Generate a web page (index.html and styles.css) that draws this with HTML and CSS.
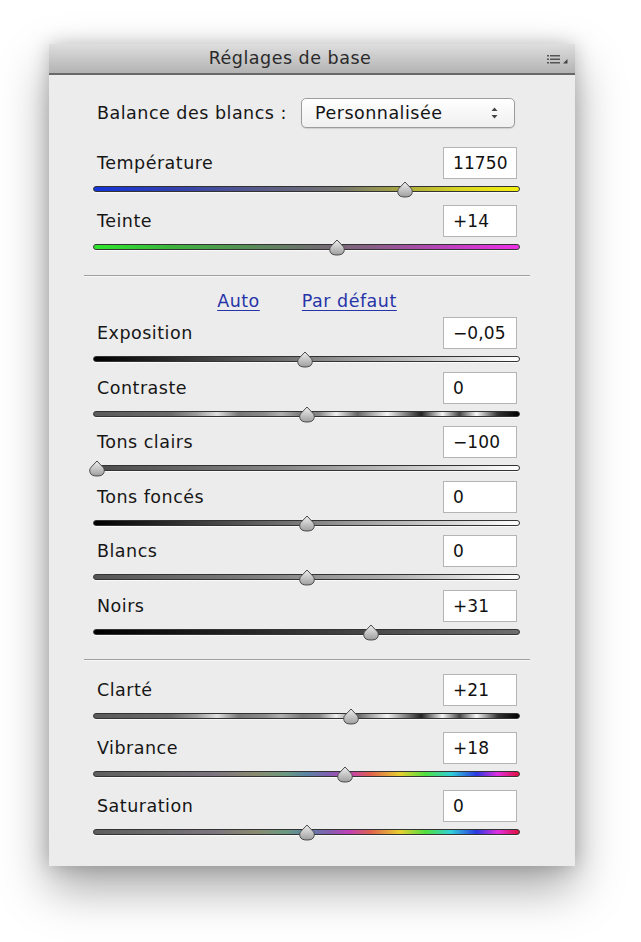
FILE: index.html
```html
<!DOCTYPE html>
<html lang="fr">
<head>
<meta charset="utf-8">
<title>Réglages de base</title>
<link rel="stylesheet" href="styles.css">
</head>
<body>
<svg class="defs" width="0" height="0" aria-hidden="true">
  <defs>
    <linearGradient id="thumbFill" x1="0" y1="0" x2="0" y2="1">
      <stop offset="0" stop-color="#f0f0f0"/>
      <stop offset="1" stop-color="#9e9e9e"/>
    </linearGradient>
    <symbol id="thumb" viewBox="0 0 17 17">
      <path d="M8.5 1 L14.5 7.3 C15.9 8.8 16 10.8 15.5 12.4 C14.6 15.4 11.6 16 8.5 16 C5.4 16 2.4 15.4 1.5 12.4 C1 10.8 1.1 8.8 2.5 7.3 Z" fill="url(#thumbFill)" stroke="#4a4a4a" stroke-width="1"/>
    </symbol>
  </defs>
</svg>

<div class="panel">
  <div class="header">
    <span class="title">Réglages de base</span>
    <svg class="menu-icon" width="21" height="11" viewBox="0 0 21 11">
      <rect x="0" y="1" width="2" height="1.5" fill="#555"/>
      <rect x="3" y="1" width="10" height="1.5" fill="#555"/>
      <rect x="0" y="4.5" width="2" height="1.5" fill="#555"/>
      <rect x="3" y="4.5" width="10" height="1.5" fill="#555"/>
      <rect x="0" y="8" width="2" height="1.5" fill="#555"/>
      <rect x="3" y="8" width="10" height="1.5" fill="#555"/>
      <polygon points="16,9.5 20.5,9.5 20.5,5" fill="#444"/>
    </svg>
  </div>

  <div class="content">
    <div class="wb-row">
      <span class="label">Balance des blancs :</span>
      <div class="popup">
        <span>Personnalisée</span>
        <svg class="updown" width="7" height="12" viewBox="0 0 7 12">
          <polygon points="3.5,0.5 6.5,4 0.5,4" fill="#444"/>
          <polygon points="0.5,8 6.5,8 3.5,11.5" fill="#444"/>
        </svg>
      </div>
    </div>

    <div class="group group-wide">
      <div class="slider">
        <div class="row-head"><span class="label">Température</span><span class="value">11750</span></div>
        <div class="track-area"><div class="track tr-temp"></div><div class="lane"><svg class="thumb" style="left:73.5%"><use href="#thumb"/></svg></div></div>
      </div>
      <div class="slider">
        <div class="row-head"><span class="label">Teinte</span><span class="value">+14</span></div>
        <div class="track-area"><div class="track tr-tint"></div><div class="lane"><svg class="thumb" style="left:57.3%"><use href="#thumb"/></svg></div></div>
      </div>
    </div>

    <div class="sep sep-1"></div>

    <div class="links">
      <a class="link" href="#">Auto</a>
      <a class="link" href="#">Par défaut</a>
    </div>

    <div class="group group-tight">
      <div class="slider">
        <div class="row-head"><span class="label">Exposition</span><span class="value">−0,05</span></div>
        <div class="track-area"><div class="track tr-expo"></div><div class="lane"><svg class="thumb" style="left:49.6%"><use href="#thumb"/></svg></div></div>
      </div>
      <div class="slider">
        <div class="row-head"><span class="label">Contraste</span><span class="value">0</span></div>
        <div class="track-area"><div class="track tr-contrast"></div><div class="lane"><svg class="thumb" style="left:50%"><use href="#thumb"/></svg></div></div>
      </div>
      <div class="slider">
        <div class="row-head"><span class="label">Tons clairs</span><span class="value">−100</span></div>
        <div class="track-area"><div class="track tr-high"></div><div class="lane"><svg class="thumb" style="left:0%"><use href="#thumb"/></svg></div></div>
      </div>
      <div class="slider">
        <div class="row-head"><span class="label">Tons foncés</span><span class="value">0</span></div>
        <div class="track-area"><div class="track tr-expo"></div><div class="lane"><svg class="thumb" style="left:50%"><use href="#thumb"/></svg></div></div>
      </div>
      <div class="slider">
        <div class="row-head"><span class="label">Blancs</span><span class="value">0</span></div>
        <div class="track-area"><div class="track tr-whites"></div><div class="lane"><svg class="thumb" style="left:50%"><use href="#thumb"/></svg></div></div>
      </div>
      <div class="slider">
        <div class="row-head"><span class="label">Noirs</span><span class="value">+31</span></div>
        <div class="track-area"><div class="track tr-blacks"></div><div class="lane"><svg class="thumb" style="left:65.5%"><use href="#thumb"/></svg></div></div>
      </div>
    </div>

    <div class="sep sep-2"></div>

    <div class="group group-wide">
      <div class="slider">
        <div class="row-head"><span class="label">Clarté</span><span class="value">+21</span></div>
        <div class="track-area"><div class="track tr-contrast"></div><div class="lane"><svg class="thumb" style="left:60.7%"><use href="#thumb"/></svg></div></div>
      </div>
      <div class="slider">
        <div class="row-head"><span class="label">Vibrance</span><span class="value">+18</span></div>
        <div class="track-area"><div class="track tr-sat"></div><div class="lane"><svg class="thumb" style="left:59.1%"><use href="#thumb"/></svg></div></div>
      </div>
      <div class="slider">
        <div class="row-head"><span class="label">Saturation</span><span class="value">0</span></div>
        <div class="track-area"><div class="track tr-sat"></div><div class="lane"><svg class="thumb" style="left:50%"><use href="#thumb"/></svg></div></div>
      </div>
    </div>
  </div>
</div>
</body>
</html>
```

FILE: styles.css
```css
html, body {
  margin: 0;
  padding: 0;
  background: #ffffff;
}

body {
  font-family: "DejaVu Sans", "Liberation Sans", sans-serif;
  font-size: 17.5px;
  letter-spacing: 0.5px;
  color: #161616;
  width: 641px;
  height: 942px;
  overflow: hidden;
}

.defs {
  position: absolute;
  width: 0;
  height: 0;
}

.panel {
  margin: 44px 0 0 49px;
  width: 526px;
  background: #ececec;
  box-shadow: 0 22px 45px rgba(0, 0, 0, 0.35), 0 0 18px rgba(0, 0, 0, 0.2);
}

.header {
  display: flex;
  align-items: center;
  height: 29px;
  background: linear-gradient(#dedede, #b3b3b3);
  border-bottom: 2px solid #686868;
}

.title {
  flex: 1;
  text-align: center;
  padding-right: 16px;
  line-height: 29px;
  color: #2a2a2a;
}

.menu-icon {
  display: block;
  margin-right: 7px;
  margin-top: 1px;
}

.content {
  padding: 23px 55px 24px 44px;
}

.wb-row {
  display: flex;
  align-items: center;
  justify-content: space-between;
  padding: 0 5px 0 4px;
  height: 30px;
  margin-bottom: 19px;
}

.label {
  line-height: 32px;
  white-space: nowrap;
}

.popup {
  box-sizing: border-box;
  width: 214px;
  height: 30px;
  display: flex;
  align-items: center;
  justify-content: space-between;
  padding: 0 16px 0 13px;
  background: linear-gradient(#ffffff, #f0f0f0);
  border: 1px solid #9c9c9c;
  border-radius: 5px;
  box-shadow: 0 1px 1px rgba(0, 0, 0, 0.12);
  color: #141414;
}

.updown {
  display: block;
}

.group {
  display: flex;
  flex-direction: column;
}

.group-wide {
  gap: 6px;
}

.group-tight {
  gap: 2.6px;
}

.row-head {
  display: flex;
  align-items: center;
  justify-content: space-between;
  height: 32px;
  padding: 0 3px 0 4px;
}

.value {
  box-sizing: border-box;
  width: 74px;
  height: 32px;
  line-height: 30px;
  padding-left: 9px;
  font-size: 17px;
  letter-spacing: 0.1px;
  background: #ffffff;
  border: 1px solid #b4b4b4;
  color: #111;
}

.track-area {
  position: relative;
  height: 20px;
}

.track {
  box-sizing: border-box;
  position: relative;
  top: 7px;
  height: 6px;
  border-radius: 3px;
  border: 1px solid #333;
  box-shadow: 0 1px 0 rgba(255, 255, 255, 0.75);
}

.lane {
  position: absolute;
  top: 0;
  bottom: 0;
  left: 4px;
  right: 4px;
}

.thumb {
  position: absolute;
  top: 2px;
  width: 17px;
  height: 17px;
  transform: translateX(-50%);
}

.tr-temp {
  background: linear-gradient(90deg, #1434d8 0%, #3040b0 18%, #5a5c88 40%, #767670 58%, #a6a640 72%, #d8d622 86%, #f4f010 100%);
}

.tr-tint {
  background: linear-gradient(90deg, #2ee62e 0%, #3cb43c 18%, #5a8a5a 38%, #707070 52%, #8a5e88 66%, #c040c0 84%, #ec30e6 100%);
}

.tr-expo {
  background: linear-gradient(90deg, #000000 0%, #555 35%, #9a9a9a 60%, #ffffff 100%);
}

.tr-high {
  background: linear-gradient(90deg, #4a4a4a 0%, #888 45%, #c8c8c8 75%, #ffffff 100%);
}

.tr-whites {
  background: linear-gradient(90deg, #555 0%, #7a7a7a 35%, #b0b0b0 70%, #ffffff 100%);
}

.tr-blacks {
  background: linear-gradient(90deg, #000000 0%, #2a2a2a 40%, #555 75%, #6e6e6e 100%);
}

.tr-contrast {
  background: linear-gradient(90deg,
    #5a5a5a 0%, #6a6a6a 18%, #9a9a9a 24%, #e0e0e0 29%, #777 34%,
    #8a8a8a 40%, #b0b0b0 44%, #777 49%, #888 53%, #f0f0f0 57%,
    #666 62%, #f4f4f4 69%, #555 75%, #222 77%, #f4f4f4 82%,
    #444 86%, #f8f8f8 90%, #333 95%, #000 100%);
}

.tr-sat {
  background: linear-gradient(90deg,
    #5e5e5e 0%, #6c6c6c 15%, #7c7480 28%, #8a8a70 38%, #6c9a80 45%,
    #5a84a4 50%, #8060b0 55%, #c040b8 60%, #e06050 65%, #e8d030 72%,
    #50e040 78%, #30d0d8 84%, #2a38e0 90%, #e030e0 95%, #e0103c 100%);
}

.sep {
  height: 1px;
  background: #a0a0a0;
  box-shadow: 0 1px 0 rgba(255, 255, 255, 0.6);
  margin-left: -9px;
  margin-right: -10px;
}

.sep-1 {
  margin-top: 18px;
}

.sep-2 {
  margin-top: 17px;
  margin-bottom: 14px;
}

.links {
  display: flex;
  justify-content: center;
  gap: 42px;
  height: 24px;
  line-height: 24px;
  margin: 13px 0 4px 0;
  padding-left: 1px;
}

.link {
  color: #2734a8;
  text-decoration: underline;
  text-underline-offset: 3px;
}
```
